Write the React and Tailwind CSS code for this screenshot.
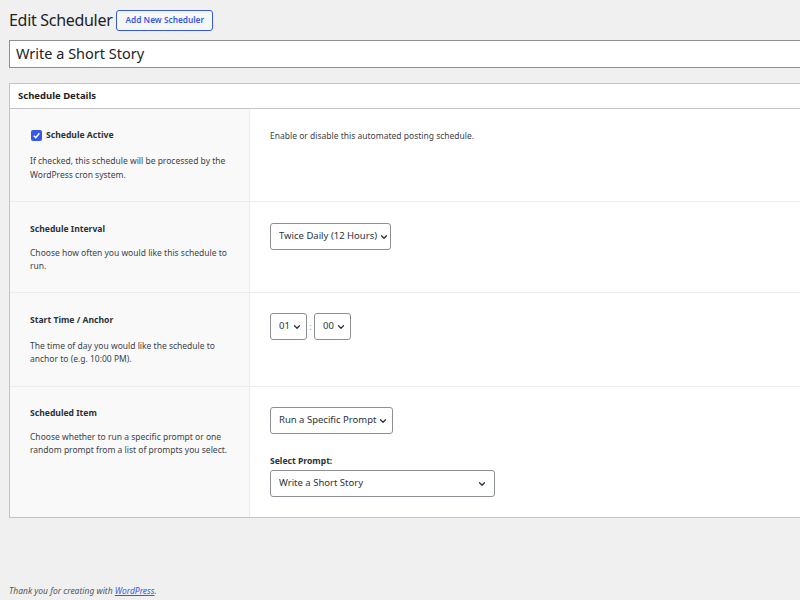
import { ChevronDown } from "lucide-react";

const font = { fontFamily: '"Noto Sans", "Open Sans", sans-serif' };

function Select({ label, className = "" }) {
    return (
        <div className={`flex items-center justify-between h-[27px] border border-[#8c8f94] rounded-[3px] bg-white pl-2 pr-[5px] text-[9.5px] whitespace-nowrap text-[#2c3338] ${className}`}>
            <span>{label}</span>
            <ChevronDown size={10} strokeWidth={3} className="ml-[2px] shrink-0 text-[#2c3338]" />
        </div>
    );
}

function Row({ left, right, last }) {
    return (
        <div className={`flex ${last ? "" : "border-b border-[#ececec]"}`}>
            <div className="w-[240px] shrink-0 bg-[#f9f9f9] border-r border-[#ececec] pl-5 pr-4">
                {left}
            </div>
            <div className="flex-1 pl-5">{right}</div>
        </div>
    );
}

export default function App() {
    return (
        <div style={font} className="w-[800px] h-[600px] overflow-hidden bg-[#f0f0f1] text-[#3c434a] relative">
            <div className="w-[830px] pl-[9px] pt-[10px]">
                <div className="flex items-center gap-[4px]">
                    <h1 className="text-[16px] leading-[21px] text-[#1d2327] tracking-[-0.3px]">Edit Scheduler</h1>
                    <button className="h-[21px] px-[8px] border border-[#3858e9] rounded-[3px] text-[8.3px] font-semibold text-[#3858e9] bg-[#f6f7f7]">
                        Add New Scheduler
                    </button>
                </div>

                <div className="mt-[9px] h-[28px] border border-[#8c8f94] bg-white flex items-center pl-[6px] text-[14.5px] text-[#1d2327]">
                    Write a Short Story
                </div>

                <div className="mt-[15px] border border-[#c3c4c7] bg-white">
                    <div className="h-[25px] flex items-center pl-2 border-b border-[#c3c4c7] text-[9.5px] font-bold text-[#1d2327]">
                        Schedule Details
                    </div>

                    <Row
                        left={
                            <div className="pt-5 pb-[19px]">
                                <div className="flex items-center gap-[4px] h-[12px] pl-px">
                                    <span className="w-[11px] h-[11px] rounded-[2px] bg-[#3858e9] flex items-center justify-center">
                                        <svg width="9" height="9" viewBox="0 0 10 10">
                                            <path d="M2 5.2 L4.2 7.4 L8.2 2.6" stroke="white" strokeWidth="1.7" fill="none" />
                                        </svg>
                                    </span>
                                    <span className="text-[8.6px] font-bold text-[#2c3338]">Schedule Active</span>
                                </div>
                                <p className="mt-[13px] text-[8.5px] leading-[14px]">
                                    If checked, this schedule will be processed by the WordPress cron system.
                                </p>
                            </div>
                        }
                        right={
                            <p className="pt-[20px] text-[8.5px] leading-[14px]">
                                Enable or disable this automated posting schedule.
                            </p>
                        }
                    />

                    <Row
                        left={
                            <div className="pt-5 pb-[20px]">
                                <div className="text-[8.6px] font-bold leading-[14px] text-[#2c3338]">Schedule Interval</div>
                                <p className="mt-[10px] text-[8.5px] leading-[13px]">
                                    Choose how often you would like this schedule to run.
                                </p>
                            </div>
                        }
                        right={
                            <div className="pt-[21px]">
                                <Select label="Twice Daily (12 Hours)" className="w-[121px]" />
                            </div>
                        }
                    />

                    <Row
                        left={
                            <div className="pt-5 pb-[21px]">
                                <div className="text-[8.6px] font-bold leading-[14px] text-[#2c3338]">Start Time / Anchor</div>
                                <p className="mt-[12px] text-[8.5px] leading-[13px]">
                                    The time of day you would like the schedule to anchor to (e.g. 10:00 PM).
                                </p>
                            </div>
                        }
                        right={
                            <div className="pt-[20px] flex items-center">
                                <Select label="01" className="w-[37px]" />
                                <span className="w-[7px] text-center text-[9px] text-[#8c8f94]">:</span>
                                <Select label="00" className="w-[37px]" />
                            </div>
                        }
                    />

                    <Row
                        last
                        left={
                            <div className="pt-[19px] pb-5">
                                <div className="text-[8.6px] font-bold leading-[14px] text-[#2c3338]">Scheduled Item</div>
                                <p className="mt-[10px] text-[8.5px] leading-[13px]">
                                    Choose whether to run a specific prompt or one random prompt from a list of prompts you select.
                                </p>
                            </div>
                        }
                        right={
                            <div className="pt-5 pb-[20px]">
                                <Select label="Run a Specific Prompt" className="w-[123px]" />
                                <div className="mt-[21px] text-[8.6px] font-bold leading-[12px] text-[#2c3338]">Select Prompt:</div>
                                <Select label="Write a Short Story" className="w-[225px] mt-[3px] pr-[7px]" />
                            </div>
                        }
                    />
                </div>

                <p className="mt-[67px] text-[8.5px] italic text-[#50575e]">
                    Thank you for creating with <a className="text-[#3858e9] underline">WordPress</a>.
                </p>
            </div>
        </div>
    );
}
